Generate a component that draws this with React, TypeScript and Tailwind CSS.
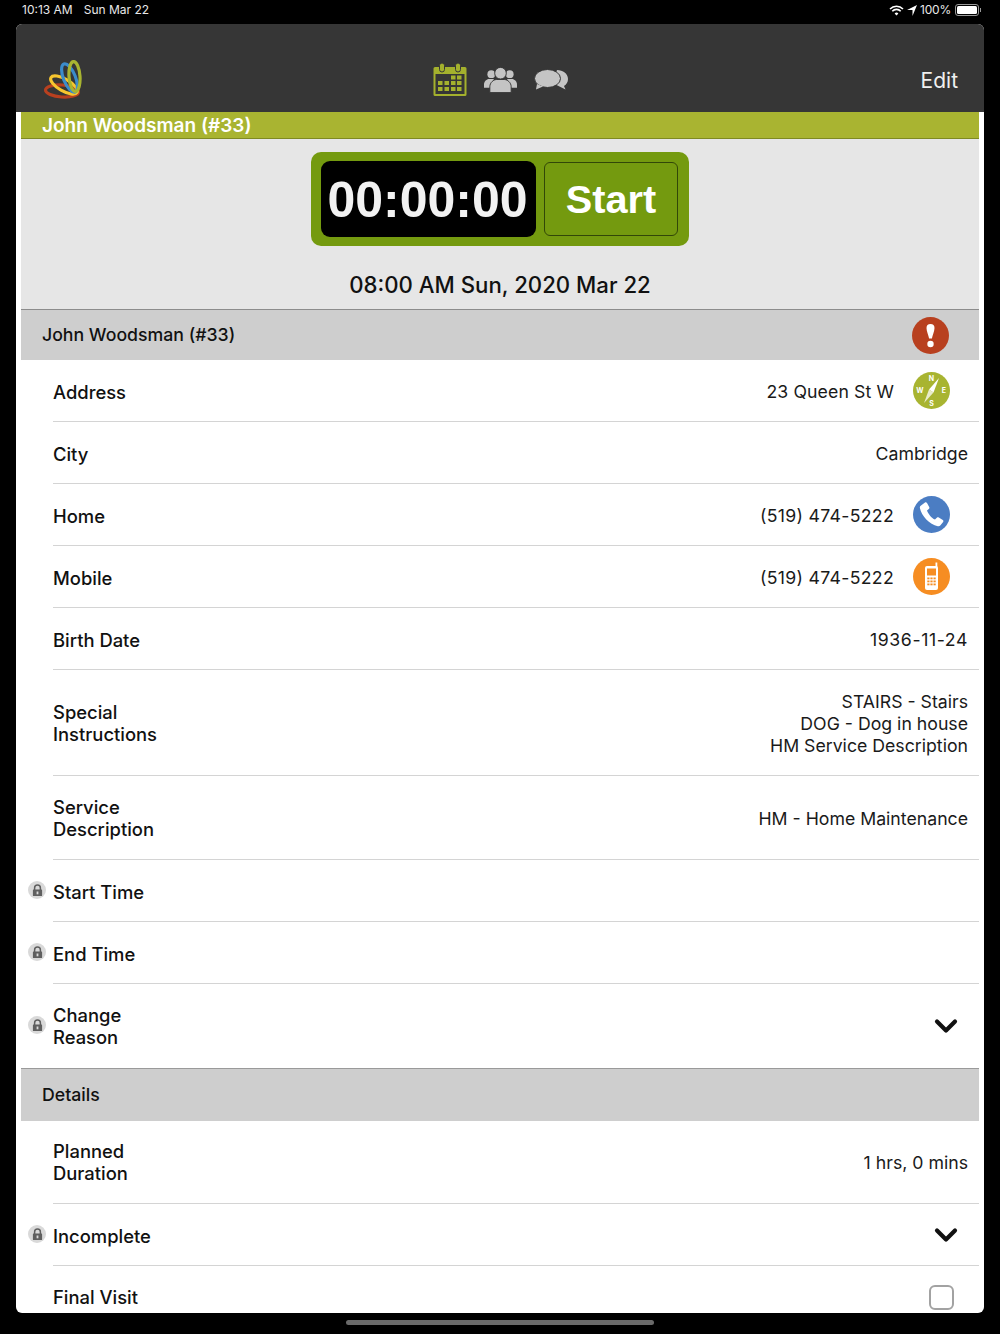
import type { ReactNode } from "react";
import { ChevronDown } from "lucide-react";

const font = "font-['Inter','Noto_Sans',sans-serif]";

function LockBadge() {
  return (
    <span className="mt-[-2px] flex h-[18px] w-[18px] items-center justify-center rounded-full bg-[#d9d9d9]">
      <svg width="11" height="13" viewBox="0 0 11 13">
        <path d="M2.6 6V4a2.9 2.9 0 0 1 5.8 0v2" fill="none" stroke="#5f5f5f" strokeWidth="1.5" />
        <path d="M1.5 5.6h8a.6.6 0 0 1 .6.6v5.3a.6.6 0 0 1-.6.6h-8a.6.6 0 0 1-.6-.6V6.200a.6.6 0 0 1 .6-.6z" fill="#5f5f5f" />
        <rect x="4.600" y="7.500" width="1.800" height="2.800" fill="#d9d9d9" />
      </svg>
    </span>
  );
}

function Row({
  label,
  height,
  locked,
  last,
  children,
}: {
  label: ReactNode;
  height: string;
  locked?: boolean;
  last?: boolean;
  children?: ReactNode;
}) {
  // one-line labels sit a touch lower than the two-line ones
  const labelTop = typeof label === "string" ? "pt-[3px]" : "";
  return (
    <div className="flex">
      <div className="flex w-[32px] shrink-0 items-center justify-end pr-[7px]">{locked ? <LockBadge /> : null}</div>
      <div className={`flex flex-1 items-center justify-between pr-[11px] ${height} ${last ? "" : "border-b border-[#d4d4d4]"}`}>
        <div className={`${labelTop} text-[18.400px] leading-[22px] font-medium text-[#111]`}>{label}</div>
        {children}
      </div>
    </div>
  );
}

function Value({ children, tracking = "" }: { children: ReactNode; tracking?: string }) {
  return <div className={`pt-[2px] text-right text-[17.700px] leading-[22px] text-[#1a1a1a] ${tracking}`}>{children}</div>;
}

function IconValue({ text, icon, tracking }: { text: string; icon: ReactNode; tracking?: string }) {
  return (
    <div className="flex items-center gap-[19px] pr-[18px]">
      <Value tracking={tracking}>{text}</Value>
      {icon}
    </div>
  );
}

function SectionHeader({ title, icon, h }: { title: string; icon?: ReactNode; h: string }) {
  return (
    <div className={`flex items-center justify-between bg-[#cecece] pl-[21px] pr-[30px] ${h}`}>
      <span className="text-[17.700px] font-medium text-[#111]">{title}</span>
      {icon}
    </div>
  );
}

function AlertIcon() {
  return (
    <svg width="37" height="37" viewBox="0 0 37 37">
      <circle cx="18.500" cy="18.500" r="18.500" fill="#b8401f" />
      <path d="M14.500 11a4 4 0 0 1 8 0c0 3-2 7.500-2.600 10.500h-2.800C16.500 18.500 14.500 14 14.500 11z" fill="#fff" />
      <circle cx="18.500" cy="27" r="3.200" fill="#fff" />
    </svg>
  );
}

function CompassIcon() {
  return (
    <svg width="37" height="37" viewBox="0 0 37 37">
      <circle cx="18.500" cy="18.500" r="18.500" fill="#a8b431" />
      <path d="M26 6 L20.500 20.500 L16 17.500z" fill="#fff" />
      <path d="M11 31 L16 17.500 L20.500 20.500z" fill="#e9eccb" />
      <text x="18.500" y="8.500" textAnchor="middle" fontSize="7" fontWeight="700" fill="#fff">N</text>
      <text x="18.500" y="34" textAnchor="middle" fontSize="7" fontWeight="700" fill="#fff">S</text>
      <text x="7" y="21" textAnchor="middle" fontSize="7" fontWeight="700" fill="#fff">W</text>
      <text x="31" y="21" textAnchor="middle" fontSize="7" fontWeight="700" fill="#fff">E</text>
    </svg>
  );
}

function PhoneIcon() {
  return (
    <svg width="37" height="37" viewBox="0 0 37 37">
      <circle cx="18.500" cy="18.500" r="18.500" fill="#4b7dc3" />
      <path
        d="M8 9.500 L12 6.500 C12.800 6 13.500 6.300 14 7 L16.200 11 C16.600 11.800 16.400 12.500 15.800 13 L14 14.400 C15 17.500 18.500 22 22 23.500 L23.800 21.700 C24.400 21.200 25.100 21.100 25.800 21.500 L29.800 24 C30.500 24.500 30.600 25.300 30.100 26 L27.500 29.300 C26.800 30.100 25.800 30.400 24.800 30.200 C16.500 28.500 8.500 20 6.900 12 C6.700 11 7.200 10 8 9.500z"
        fill="#fff"
      />
    </svg>
  );
}

function MobileIcon() {
  return (
    <svg width="37" height="37" viewBox="0 0 37 37">
      <circle cx="18.500" cy="18.500" r="18.500" fill="#f68d22" />
      <rect x="22.500" y="4.500" width="1.800" height="5" fill="#fff" />
      <rect x="12" y="8" width="13" height="24" rx="2" fill="#fff" />
      <rect x="14" y="10.500" width="9" height="7" fill="#f68d22" />
      <g fill="#f68d22">
        <rect x="14.300" y="19.500" width="2.200" height="1.800" />
        <rect x="17.400" y="19.500" width="2.200" height="1.800" />
        <rect x="20.500" y="19.500" width="2.200" height="1.800" />
        <rect x="14.300" y="22.500" width="2.200" height="1.800" />
        <rect x="17.400" y="22.500" width="2.200" height="1.800" />
        <rect x="20.500" y="22.500" width="2.200" height="1.800" />
        <rect x="14.300" y="25.500" width="2.200" height="1.800" />
        <rect x="17.400" y="25.500" width="2.200" height="1.800" />
        <rect x="20.500" y="25.500" width="2.200" height="1.800" />
      </g>
    </svg>
  );
}

function Logo() {
  return (
    <svg width="40" height="40" viewBox="0 0 40 40" fill="none">
      <ellipse cx="19" cy="31" rx="16.500" ry="6" transform="rotate(4 19 31)" stroke="#b8401f" strokeWidth="3.200" />
      <ellipse cx="21" cy="25" rx="15" ry="6" transform="rotate(30 21 25)" stroke="#f7c52e" strokeWidth="3.200" />
      <ellipse cx="26.500" cy="18" rx="6" ry="15" transform="rotate(-22 26.500 18)" stroke="#3b8ccb" strokeWidth="3.200" />
      <ellipse cx="31.500" cy="16.500" rx="5.500" ry="15" transform="rotate(-4 31.500 16.500)" stroke="#a8b431" strokeWidth="3.200" />
    </svg>
  );
}

function CalendarIcon() {
  return (
    <svg width="34" height="34" viewBox="0 0 34 34">
      <path d="M2 4h30a1.500 1.500 0 0 1 1.500 1.500v26a1.500 1.500 0 0 1-1.500 1.500H2A1.500 1.500 0 0 1 .5 31.500v-26A1.500 1.500 0 0 1 2 4z" fill="#a4b12d" />
      <rect x="2.500" y="11" width="29" height="20" fill="#363636" />
      <rect x="6.500" y="0" width="5" height="9" rx="2.500" fill="#a4b12d" stroke="#363636" />
      <rect x="22.500" y="0" width="5" height="9" rx="2.500" fill="#a4b12d" stroke="#363636" />
      <g fill="#a4b12d">
        {[[18, 12.500], [24, 12.500], [18, 18], [24, 18], [5, 18], [11.500, 18], [5, 24], [11.500, 24], [18, 24], [24, 24]].map(([x, y]) => (
          <rect key={`${x}-${y}`} x={x} y={y} width="4.500" height="4" />
        ))}
      </g>
    </svg>
  );
}

function PeopleIcon() {
  return (
    <svg width="33" height="26" viewBox="0 0 34 26" fill="#c4c4c4">
      <circle cx="7.500" cy="7" r="4" />
      <circle cx="26.500" cy="7" r="4" />
      <path d="M0 21v-3.500c0-3 3-5.500 5-5.500h5v9z" />
      <path d="M34 21v-3.500c0-3-3-5.500-5-5.500h-5v9z" />
      <circle cx="17" cy="6" r="6" stroke="#363636" strokeWidth="1" />
      <path d="M6 26v-6c0-4.500 4-7.500 7-7.500h8c3 0 7 3 7 7.500v6z" stroke="#363636" strokeWidth="1" />
    </svg>
  );
}

function ChatIcon() {
  return (
    <svg width="35" height="22" viewBox="0 0 35 22" fill="#c4c4c4">
      <path d="M23 1c6 0 11 3.800 11 9 0 3-1.500 5.500-4 7l1.500 3.500-5-2.500-8-4z" />
      <ellipse cx="13.500" cy="9.500" rx="13" ry="9" stroke="#363636" strokeWidth="1" />
      <path d="M3 15l-1 5.500 7-3z" />
    </svg>
  );
}

function StatusBar() {
  return (
    <div className="mb-[4px] flex h-[20px] items-center justify-between pl-[22px] pr-[19px] text-[12px] text-[#e8e8e8]">
      <div className="flex gap-[11px]">
        <span>10:13 AM</span>
        <span>Sun Mar 22</span>
      </div>
      <div className="flex items-center gap-[3px]">
        <svg width="15" height="11" viewBox="0 0 15 11" fill="none" stroke="#fff" strokeWidth="1.600">
          <path d="M1 4a9 9 0 0 1 13 0" />
          <path d="M3.300 6.300a5.600 5.600 0 0 1 8.400 0" />
          <path d="M7.500 10.500 5.600 8.500a2.700 2.700 0 0 1 3.800 0z" fill="#fff" stroke="none" />
        </svg>
        <svg width="10" height="11" viewBox="0 0 10 11" fill="#fff">
          <path d="M10 0 5.500 11V5H0z" />
        </svg>
        <span className="tracking-[-0.200px]">100%</span>
        <div className="ml-[1px] flex items-center">
          <div className="h-[12px] w-[24px] rounded-[3px] border border-[#999] p-[1px]">
            <div className="h-full w-full rounded-[1.500px] bg-white" />
          </div>
          <div className="ml-[1px] h-[4px] w-[1px] bg-[#999]" />
        </div>
      </div>
    </div>
  );
}

function Timer() {
  return (
    <div className="flex h-[94px] w-[378px] items-center gap-[8px] rounded-[10px] bg-[#749a0f] pl-[10px] pr-[11px]">
      <div className="flex h-[76px] w-[215px] items-center justify-center rounded-[9px] bg-black pt-[3px] pr-[2px] font-['Liberation_Sans',sans-serif] text-[50px] font-bold text-[#f2f2f2]">
        00:00:00
      </div>
      <div className="flex h-[74px] w-[134px] items-center justify-center rounded-[6px] border border-[#324708] pt-[1px] font-['Liberation_Sans',sans-serif] text-[39.700px] font-bold text-white">
        Start
      </div>
    </div>
  );
}

export default function App() {
  return (
    <div className={`h-[1334px] w-[1000px] overflow-hidden bg-black ${font}`}>
      <StatusBar />
      <div className="mx-[16px] flex h-[1289px] flex-col overflow-hidden rounded-[6px] bg-white">
        <div className="flex h-[88px] shrink-0 items-end justify-between bg-[#363636] pb-[12px] pl-[27px] pr-[26px]">
          <Logo />
          <div className="mb-[3px] mr-[1px] flex items-center gap-[17px]">
            <CalendarIcon />
            <PeopleIcon />
            <ChatIcon />
          </div>
          <span className="pb-[4px] text-[21px] text-[#f0f0f0]">Edit</span>
        </div>

        <div className="mx-[5px] flex flex-1 flex-col overflow-hidden">
          <div className="h-[27px] shrink-0 border-b border-[#7f8a22] bg-[#a9b431] pl-[21px] text-[19px] leading-[28px] font-semibold text-white">
            John Woodsman (#33)
          </div>
          <div className="flex h-[171px] shrink-0 flex-col items-center border-b border-[#8c8c8c] bg-[#e6e6e6] pt-[13px]">
            <Timer />
            <div className="mt-[24px] text-[22.200px] leading-[30px] font-medium text-[#111]">08:00 AM Sun, 2020 Mar 22</div>
          </div>

          <SectionHeader title="John Woodsman (#33)" h="h-[50px] shrink-0" icon={<AlertIcon />} />
          <Row label="Address" height="h-[62px]">
            <IconValue text="23 Queen St W" tracking="tracking-[0.100px]" icon={<CompassIcon />} />
          </Row>
          <Row label="City" height="h-[62px]">
            <Value>Cambridge</Value>
          </Row>
          <Row label="Home" height="h-[62px]">
            <IconValue text="(519) 474-5222" tracking="tracking-[0.300px]" icon={<PhoneIcon />} />
          </Row>
          <Row label="Mobile" height="h-[62px]">
            <IconValue text="(519) 474-5222" tracking="tracking-[0.300px]" icon={<MobileIcon />} />
          </Row>
          <Row label="Birth Date" height="h-[62px]">
            <Value tracking="tracking-[0.600px]">1936-11-24</Value>
          </Row>
          <Row label={<>Special<br />Instructions</>} height="h-[106px]">
            <Value>
              STAIRS - Stairs
              <br />
              DOG - Dog in house
              <br />
              HM Service Description
            </Value>
          </Row>
          <Row label={<>Service<br />Description</>} height="h-[84px]">
            <Value>HM - Home Maintenance</Value>
          </Row>
          <Row label="Start Time" height="h-[62px]" locked />
          <Row label="End Time" height="h-[62px]" locked />
          <Row label={<>Change<br />Reason</>} height="h-[84px]" locked last>
            <ChevronDown size={36} strokeWidth={2.800} className="mr-[4px] text-[#111]" />
          </Row>
          <div className="h-[1px] shrink-0 bg-[#9a9a9a]" />
          <SectionHeader title="Details" h="h-[52px] shrink-0" />
          <Row label={<>Planned<br />Duration</>} height="h-[83px]">
            <Value>1 hrs, 0 mins</Value>
          </Row>
          <Row label="Incomplete" height="h-[62px]" locked>
            <ChevronDown size={36} strokeWidth={2.800} className="mr-[4px] text-[#111]" />
          </Row>
          <Row label="Final Visit" height="h-[59px]" last>
            <div className="mr-[14px] mt-[3px] h-[25px] w-[25px] rounded-[6px] border-2 border-[#a2a2a2]" />
          </Row>
        </div>
      </div>
      <div className="mx-auto mt-[7px] h-[5px] w-[308px] rounded-full bg-[#6a6a6a]" />
    </div>
  );
}
